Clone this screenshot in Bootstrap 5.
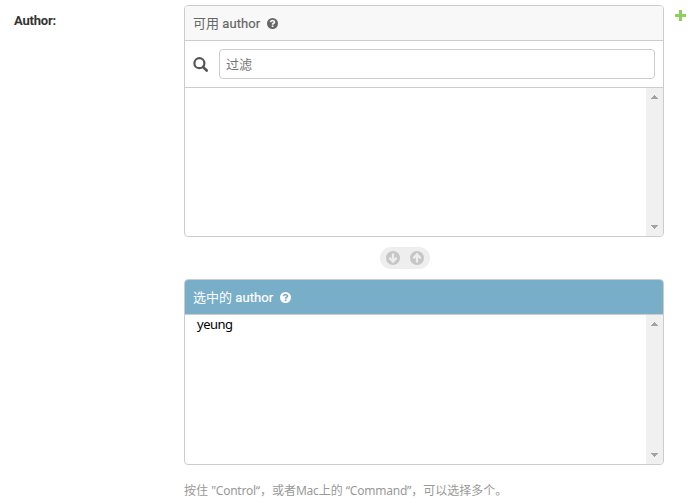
<!DOCTYPE html>
<html lang="zh-CN">
<head>
<meta charset="utf-8">
<meta name="viewport" content="width=device-width, initial-scale=1">
<title>Author</title>
<link href="https://cdn.jsdelivr.net/npm/bootstrap@5.3.0/dist/css/bootstrap.min.css" rel="stylesheet">
<style>
body{font:13px/18px Roboto,"Noto Sans CJK SC",sans-serif;color:#333;overflow:hidden}
.form-line{padding:5px 11px 0 14px}
.field-label{width:170px;padding-top:7px;line-height:18px;letter-spacing:-.2px}
.selector{width:480px}
.box{border:1px solid #ccc;border-radius:4px;overflow:hidden}
.box-title{height:35px;padding:1px 8px 0;border-bottom:1px solid #ccc;background:#f8f8f8;color:#666}
.box-title.chosen{background:#79aec8;color:#fff}
.box-title .model{letter-spacing:.1px;-webkit-text-stroke:.2px currentColor}
.help-mark{width:11px;height:11px;margin-left:6.5px}
.filter{height:47px;padding:0 8px;border-bottom:1px solid #ccc}
.filter .form-control{height:30px;margin-left:11px;padding:0 6px;border:1px solid #ccc;border-radius:4px;font-size:13px;color:#333}
.filter .form-control::placeholder{color:#757575}
.options{height:148px}
.options.short{height:149px}
.option{padding:0 12px;font-family:"Noto Sans","Noto Sans CJK SC",sans-serif;color:#000;letter-spacing:-.5px}
.track{width:17px;background:#f0f0f0;padding:7px 0 6px}
.pill{width:50px;height:22px;margin:10px 0 10px 196px;background:#eee;border-radius:11px;gap:10px}
.hint{margin-top:17px;font:12px/18px "Noto Sans","Noto Sans CJK SC",sans-serif;color:#999;white-space:nowrap}
.hint span{letter-spacing:-.23px}
.add{margin:5px 0 0 11px;width:11px;height:11px}
svg{display:block;flex:none}
</style>
<script src="https://cdn.jsdelivr.net/npm/bootstrap@5.3.0/dist/js/bootstrap.bundle.min.js"></script>
</head>
<body class="bg-white">
<svg class="d-none">
<symbol id="help" viewBox="0 0 11 11"><circle cx="5.5" cy="5.5" r="5.5" fill="currentColor"/><path d="M3.4 4.1Q4.1 2.5 5.6 2.5Q7.5 2.7 7.5 4.1Q7.5 4.9 6.5 5.4Q5.6 5.8 5.6 6.7" fill="none" stroke="var(--mark)" stroke-width="1.7"/><path d="M4.7 7.5h1.8v1.6H4.7z" fill="var(--mark)"/></symbol>
<symbol id="up" viewBox="0 0 9 5"><path fill="#a3a3a3" d="M4 0h1v1h1v1h1v1h1v1H1V3h1V2h1V1h1z"/></symbol>
<symbol id="down" viewBox="0 0 9 5"><path fill="#a3a3a3" d="M1 0h7v1H7v1H6v1H5v1H4V3H3V2H2V1H1z"/></symbol>
</svg>
<main class="form-line d-flex align-items-start">
<label class="field-label fw-bold" for="filter">Author:</label>
<div class="selector">
<section class="box">
<div class="box-title d-flex align-items-center" style="--mark:#f8f8f8"><div>可用 <span class="model">author</span></div><svg class="help-mark"><use href="#help"/></svg></div>
<div class="filter d-flex align-items-center">
<svg width="15" height="15" viewBox="0 0 15 15" fill="none" stroke="#555"><circle cx="6.4" cy="6.2" r="5" stroke-width="2.2"/><path d="M10 9.8l3.7 3.7" stroke-width="2.6" stroke-linecap="round"/></svg>
<input id="filter" class="form-control" placeholder="过滤">
</div>
<div class="options d-flex"><div class="flex-grow-1"></div><div class="track d-flex flex-column justify-content-between align-items-center"><svg width="9" height="5"><use href="#up"/></svg><svg width="9" height="5"><use href="#down"/></svg></div></div>
</section>
<div class="pill d-flex align-items-center justify-content-center">
<svg width="14" height="14" viewBox="0 0 14 14"><circle cx="7" cy="7" r="7" fill="#c6c6c6"/><path d="M7 2.6v7.5M3.3 6.8L7 10.5l3.7-3.7" fill="none" stroke="#eee" stroke-width="2.3"/></svg>
<svg width="14" height="14" viewBox="0 0 14 14"><circle cx="7" cy="7" r="7" fill="#c6c6c6"/><path d="M7 11.4V3.9M3.3 7.2L7 3.5l3.7 3.7" fill="none" stroke="#eee" stroke-width="2.3"/></svg>
</div>
<section class="box">
<div class="box-title chosen d-flex align-items-center" style="--mark:#79aec8"><div>选中的 <span class="model">author</span></div><svg class="help-mark"><use href="#help"/></svg></div>
<div class="options short d-flex"><div class="option flex-grow-1">yeung</div><div class="track d-flex flex-column justify-content-between align-items-center"><svg width="9" height="5"><use href="#up"/></svg><svg width="9" height="5"><use href="#down"/></svg></div></div>
</section>
<div class="hint">按住 <span>"Control“</span>，或者<span>Mac</span>上的 <span>“Command”</span>，可以选择多个。</div>
</div>
<svg class="add" viewBox="0 0 11 11"><path fill="#8fd05a" d="M4 0h3v4h4v3H7v4H4V7H0V4h4z"/></svg>
</main>
</body>
</html>
